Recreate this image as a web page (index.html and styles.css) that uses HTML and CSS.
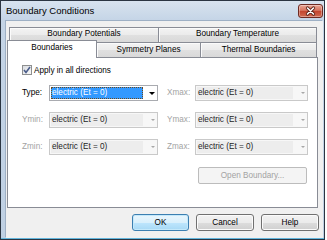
FILE: index.html
```html
<!DOCTYPE html>
<html lang="en">
<head>
    <meta charset="UTF-8">
    <meta name="viewport" content="width=device-width, initial-scale=1.0">
    <title>Boundary Conditions</title>
    <link rel="stylesheet" href="styles.css">
</head>
<body>
    <div class="window">
        <div class="titlebar">
            <span class="title">Boundary Conditions</span>
            <button type="button" class="close-btn" aria-label="Close">
                <svg width="25" height="14" viewBox="0 0 25 14">
                    <path d="M9.5 4 L15.5 10 M15.5 4 L9.5 10" stroke="#5b2218" stroke-width="3.2" stroke-linecap="round"/>
                    <path d="M9.5 4 L15.5 10 M15.5 4 L9.5 10" stroke="#ffffff" stroke-width="1.6" stroke-linecap="round"/>
                </svg>
            </button>
        </div>

        <div class="client">
            <div class="tab-control">
                <div class="tab-row back">
                    <div class="tab potentials">Boundary Potentials</div>
                    <div class="tab temperature">Boundary Temperature</div>
                </div>
                <div class="tab-row front">
                    <div class="tab selected">Boundaries</div>
                    <div class="tab symmetry">Symmetry Planes</div>
                    <div class="tab thermal">Thermal Boundaries</div>
                </div>

                <div class="tab-panel">
                    <label class="check-row">
                        <span class="checkbox">
                            <svg width="8" height="8" viewBox="0 0 8 8">
                                <path d="M1 4 L3 6.5 L7 1" fill="none" stroke="#4a5d8a" stroke-width="1.6"/>
                            </svg>
                        </span>
                        Apply in all directions
                    </label>

                    <div class="form-grid">
                        <span class="field-label">Type:</span>
                        <div class="combo focused">
                            <span class="combo-value">electric (Et = 0)</span>
                            <span class="combo-arrow"></span>
                        </div>
                        <span class="field-label right disabled">Xmax:</span>
                        <div class="combo disabled">
                            <span class="combo-value">electric (Et = 0)</span>
                            <span class="combo-arrow"></span>
                        </div>

                        <span class="field-label disabled">Ymin:</span>
                        <div class="combo disabled">
                            <span class="combo-value">electric (Et = 0)</span>
                            <span class="combo-arrow"></span>
                        </div>
                        <span class="field-label right disabled">Ymax:</span>
                        <div class="combo disabled">
                            <span class="combo-value">electric (Et = 0)</span>
                            <span class="combo-arrow"></span>
                        </div>

                        <span class="field-label disabled">Zmin:</span>
                        <div class="combo disabled">
                            <span class="combo-value">electric (Et = 0)</span>
                            <span class="combo-arrow"></span>
                        </div>
                        <span class="field-label right disabled">Zmax:</span>
                        <div class="combo disabled">
                            <span class="combo-value">electric (Et = 0)</span>
                            <span class="combo-arrow"></span>
                        </div>

                        <button type="button" class="open-btn" disabled>Open Boundary...</button>
                    </div>
                </div>
            </div>

            <div class="dialog-buttons">
                <button type="button" class="dlg-btn default">OK</button>
                <button type="button" class="dlg-btn">Cancel</button>
                <button type="button" class="dlg-btn">Help</button>
            </div>
        </div>
    </div>
</body>
</html>
```

FILE: styles.css
```css
body {
    margin: 0;
    width: 327px;
    height: 240px;
    overflow: hidden;
    background-color: #ffffff;
    font-family: "Liberation Sans", Arial, sans-serif;
    font-size: 8.2px;
    color: #000000;
}

.window {
    width: 325px;
    height: 240px;
    box-sizing: border-box;
    display: flex;
    flex-direction: column;
    padding: 0 1px 1px 5px;
    border: 1px solid #2b3542;
    background: linear-gradient(to bottom, #d8e3ef, #c4d4e6 20px, #bfd0e3);
    box-shadow: inset 0 -1px #62b6dd;
}

.titlebar {
    height: 20px;
    display: flex;
    justify-content: space-between;
    align-items: flex-start;
}

.title {
    font-size: 9.5px;
    line-height: 20px;
}

.close-btn {
    width: 25px;
    height: 14px;
    margin-top: 3px;
    padding: 0;
    border: 1px solid #6e2a22;
    border-radius: 3px;
    background: linear-gradient(to bottom, #eaa797, #d77560 45%, #c4442e 52%, #d06a50);
    box-shadow: inset 0 0 0 1px rgba(255, 255, 255, 0.35);
    display: flex;
    align-items: center;
    justify-content: center;
    overflow: hidden;
}

.close-btn svg {
    display: block;
    flex-shrink: 0;
}

.client {
    flex: 1;
    display: flex;
    flex-direction: column;
    padding: 6px 0 0 1px;
    background-color: #f0f0f0;
    box-shadow: -1px -1px 0 0 #9eb0c5;
}

/* tabs */

.tab-control {
    width: 311px;
}

.tab-row {
    display: flex;
    height: 15px;
    padding-left: 2px;
}

.tab {
    box-sizing: border-box;
    height: 15px;
    border: 1px solid #898c95;
    border-bottom: none;
    background: linear-gradient(to bottom, #f3f3f3, #ebebeb 50%, #e0e0e0 51%, #d9d9d9);
    box-shadow: inset 1px 1px #fbfbfb;
    text-align: center;
    line-height: 13px;
    white-space: nowrap;
}

.back .tab {
    line-height: 12px;
}

.tab.potentials {
    width: 150px;
}

.tab.temperature {
    width: 159px;
    margin-left: -1px;
}

.tab.selected {
    position: relative;
    z-index: 2;
    width: 90px;
    height: 18px;
    margin: -2px 0 -1px -2px;
    background: #ffffff;
    box-shadow: none;
    line-height: 13px;
}

.tab.symmetry {
    width: 105px;
    margin-left: -1px;
}

.tab.thermal {
    width: 117px;
    margin-left: -1px;
}

.tab-panel {
    position: relative;
    z-index: 1;
    box-sizing: border-box;
    height: 151px;
    border: 1px solid #898c95;
    background-color: #ffffff;
    padding: 7px 0 0 14px;
}

/* panel contents */

.check-row {
    display: flex;
    align-items: center;
    height: 10px;
    gap: 2px;
}

.checkbox {
    box-sizing: border-box;
    width: 10px;
    height: 10px;
    border: 1px solid #8e8f8f;
    background: linear-gradient(135deg, #d9dce0, #f8f8f8);
    display: flex;
    align-items: center;
    justify-content: center;
}

.checkbox svg {
    display: block;
}

.form-grid {
    display: grid;
    grid-template-columns: 27px 109px 37px 113px;
    grid-auto-rows: 16px;
    row-gap: 11px;
    margin-top: 10px;
}

.field-label {
    line-height: 16px;
    white-space: nowrap;
}

.field-label.right {
    padding-left: 9px;
}

.field-label.disabled {
    color: #a3a3a3;
}

.combo {
    box-sizing: border-box;
    display: flex;
    height: 16px;
    padding: 1px;
    border: 1px solid #a9abb0;
    background-color: #ffffff;
}

.combo-value {
    flex: 1;
    padding-left: 1px;
    line-height: 12px;
    white-space: nowrap;
    overflow: hidden;
}

.combo-arrow {
    width: 12px;
    display: flex;
    align-items: center;
    justify-content: flex-end;
    padding-right: 1px;
}

.combo-arrow::after {
    content: "";
    border-left: 3px solid transparent;
    border-right: 3px solid transparent;
    border-top: 3px solid #000000;
}

.combo.focused .combo-value {
    background-color: #3399ff;
    color: #ffffff;
    outline: 1px dotted #6a4a20;
    outline-offset: -1px;
}

.combo.disabled {
    border-color: #c9c9c9;
    background-color: #f7f7f7;
}

.combo.disabled .combo-value {
    background-color: #ededed;
    color: #1e1e1e;
}

.combo.disabled .combo-arrow::after {
    border-left-width: 2.5px;
    border-right-width: 2.5px;
    border-top: 2.5px solid #a8a8a8;
}

.open-btn {
    grid-column: 4;
    justify-self: start;
    width: 109px;
    height: 17px;
    margin: 1px 0 0 3px;
    padding: 0;
    border: 1px solid #bcbcbc;
    border-radius: 2px;
    background-color: #f4f4f4;
    color: #a3a3a3;
    font-family: inherit;
    font-size: 8.2px;
}

/* dialog buttons */

.dialog-buttons {
    display: flex;
    justify-content: flex-end;
    gap: 7px;
    margin: 6px 4px 0 0;
}

.dlg-btn {
    width: 58px;
    height: 17px;
    padding: 0;
    border: 1px solid #707070;
    border-radius: 3px;
    background: linear-gradient(to bottom, #f2f2f2, #ebebeb 50%, #dddddd 51%, #cfcfcf);
    box-shadow: inset 0 0 0 1px #fbfbfb;
    font-family: inherit;
    font-size: 8.2px;
    color: #000000;
}

.dlg-btn.default {
    width: 57px;
    border-color: #3c7fb1;
    background: linear-gradient(to bottom, #eaf6fd, #d9f0fc 50%, #bee6fd 51%, #a7d9f5);
    box-shadow: inset 0 0 0 1px #c4e9fb;
}
```
